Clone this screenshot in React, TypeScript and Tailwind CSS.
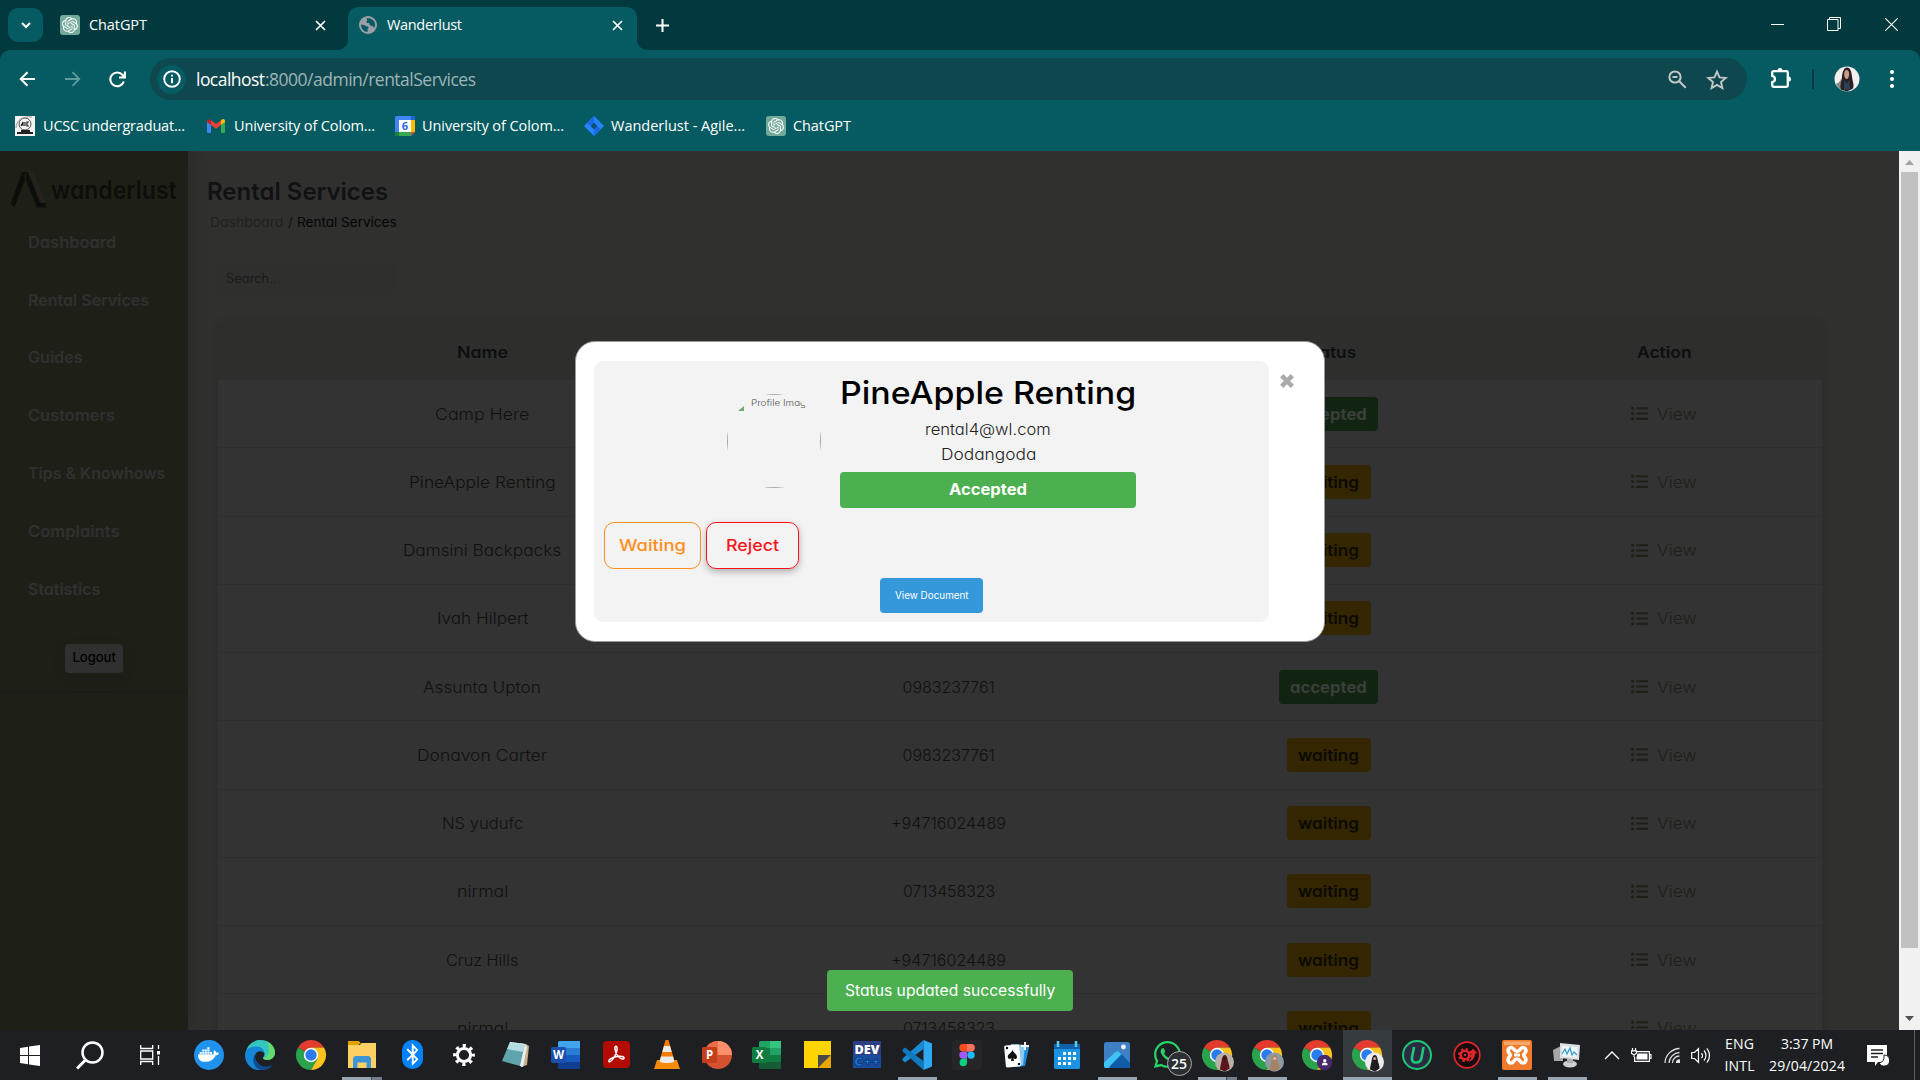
import { useLayoutEffect, useRef, useState } from "react";
import type { ReactNode } from "react";
import { FaDocker, FaBluetoothB, FaWhatsapp, FaListUl, FaUser } from "react-icons/fa";
import { SiOpenai } from "react-icons/si";

/* Single line of text whose tracking is adjusted so that it spans `w` pixels. */
function T({ w, children, className = "" }: { w: number; children: string; className?: string }) {
  const ref = useRef<HTMLSpanElement>(null);
  const [ls, setLs] = useState(0);
  useLayoutEffect(() => {
    const el = ref.current;
    if (!el) return;
    el.style.letterSpacing = "0px";
    const natural = el.getBoundingClientRect().width;
    const next = (w - natural) / Math.max(1, children.length - 1);
    el.style.letterSpacing = `${next}px`;
    setLs(next);
  }, [w, children]);
  return (
    <span
      ref={ref}
      className={`inline-block shrink-0 whitespace-pre ${className}`}
      style={{ letterSpacing: ls, marginRight: -ls }}
    >
      {children}
    </span>
  );
}

function P({ w, children, className = "" }: { w: number; children: string; className?: string }) {
  const ref = useRef<HTMLSpanElement>(null);
  const [k, setK] = useState(1);
  useLayoutEffect(() => {
    if (ref.current) setK(w / ref.current.offsetWidth);
  }, [w, children]);
  return (
    <span className={`block shrink-0 whitespace-pre ${className}`} style={{ width: w }}>
      <span ref={ref} className="inline-block origin-left align-top" style={{ transform: `scaleX(${k})` }}>
        {children}
      </span>
    </span>
  );
}

function GptIcon() {
  return (
    <span className="flex size-5 shrink-0 items-center justify-center rounded-[3px] bg-[#74aa9c]">
      <SiOpenai className="size-4 text-white" />
    </span>
  );
}

function Cross() {
  return (
    <svg width="11" height="11" viewBox="0 0 11 11" stroke="#fff" strokeWidth="1.7" className="shrink-0">
      <path d="M1 1l9 9M10 1l-9 9" />
    </svg>
  );
}

function TabStrip() {
  return (
    <div className="flex h-[50px] items-center bg-[#02393e] text-[14.5px] text-white">
      <div className="ml-2 flex h-[34px] w-[35px] items-center justify-center rounded-[10px] bg-[#055b61]">
        <svg width="10" height="7" viewBox="0 0 10 7" fill="none" stroke="#fff" strokeWidth="2">
          <path d="M1 1l4 4 4-4" />
        </svg>
      </div>
      <div className="flex w-[305px] items-center pl-[17px]">
        <GptIcon />
        <T w={58} className="ml-[9px]">ChatGPT</T>
        <span className="ml-auto mr-[22px]"><Cross /></span>
      </div>
      <div className="relative flex h-[43px] w-[289px] items-center self-end rounded-t-[10px] bg-[#055b61] pb-[7px] pl-[11px]">
        <svg className="absolute -left-[10px] bottom-0" width="10" height="10"><path d="M10 0v10H0A10 10 0 0 0 10 0z" fill="#055b61" /></svg>
        <svg className="absolute -right-[10px] bottom-0" width="10" height="10"><path d="M0 0v10h10A10 10 0 0 1 0 0z" fill="#055b61" /></svg>
        <svg width="18" height="18" viewBox="0 0 18 18" className="shrink-0">
          <circle cx="9" cy="9" r="9" fill="#9aa0a6" />
          <path d="M2 8.5c2 .2 3.300 .5 4.600 1.200s2.600.6 2.900 1.500-.6 1.500-1 2.300V16C4.800 15.800 2 13 2 8.500zM7.500 2.500C11 1.500 15 3.500 16 7.500c.3 2-.2 3.500-1 4.500-.5-1.400-1-2-2.200-2.100-1.500-.2-2.300-.8-2.300-1.800s-.8-1.200-2-1.100c-1-.2-1.300-1-.8-1.700.8-.8.3-1.600-.2-2.800z" fill="#055b61" />
        </svg>
        <T w={75} className="ml-[10px]">Wanderlust</T>
        <span className="ml-auto mr-[14px]"><Cross /></span>
      </div>
      <svg width="15" height="15" viewBox="0 0 15 15" stroke="#fff" strokeWidth="2" className="ml-[18px]">
        <path d="M7.500 1v13M1 7.500h13" />
      </svg>
      <div className="ml-auto mr-[22px] flex items-center gap-[43px]">
        <svg width="13" height="13" viewBox="0 0 13 13" stroke="#fff" className="-translate-x-px"><path d="M0 5.500h13" /></svg>
        <svg width="14" height="14" viewBox="0 0 14 14" fill="none" stroke="#fff" className="-translate-x-px -translate-y-px"><path d="M.5 2.500h10.500v11H.5zM2.500 2.500v-2h11v11h-2.500" /></svg>
        <svg width="13" height="13" viewBox="0 0 13 13" stroke="#fff" strokeWidth="1.100" className="-translate-y-px"><path d="M0 0l13 13M13 0L0 13" /></svg>
      </div>
    </div>
  );
}

function Toolbar() {
  return (
    <div className="bg-[#02393e]">
      <div className="flex h-[58px] items-center rounded-t-[10px] bg-[#055b61]">
        <svg width="16" height="16" viewBox="0 0 16 16" fill="none" stroke="#fff" strokeWidth="2" className="ml-[19px]"><path d="M16 8H2M8.500 1.200L1.700 8l6.800 6.800" /></svg>
        <svg width="16" height="16" viewBox="0 0 16 16" fill="none" stroke="#5f9a9e" strokeWidth="1.800" className="ml-[30px]"><path d="M0 8h14M7.500 1.200L14.300 8l-6.800 6.800" /></svg>
        <svg width="17" height="17" viewBox="0 0 17 17" fill="none" stroke="#fff" strokeWidth="2.100" className="ml-[28px]"><path d="M14.800 10.500A6.900 6.900 0 1 1 13.600 4L15.500 6M15.900.5v6H10" /></svg>
        <div className="ml-[24px] flex h-[42px] w-[1597px] items-center rounded-full bg-[#0f474e] pl-[7px]">
          <span className="flex size-[29px] items-center justify-center rounded-full bg-[#055b61]">
            <svg width="18" height="18" viewBox="0 0 18 18" fill="none" stroke="#fff" strokeWidth="1.900"><circle cx="9" cy="9" r="7.800" /><path d="M9 8v5.200M9 4.700v1.900" /></svg>
          </span>
          <span className="ml-[10px] text-[17.500px]">
            <T w={69} className="text-white">localhost</T>
            <T w={211} className="text-[#9db5b8]">:8000/admin/rentalServices</T>
          </span>
          <svg width="19" height="19" viewBox="0 0 19 19" fill="none" stroke="#c3c7c8" strokeWidth="2" className="ml-auto"><circle cx="7" cy="7" r="5.600" /><path d="M11.200 11.200l6.500 6.500M4.500 7h5" /></svg>
          <svg width="22" height="21" viewBox="0 0 22 21" fill="none" stroke="#c3c7c8" strokeWidth="1.900" className="ml-[19px] mr-[19px]"><path d="M11 2.600l2.500 5.800 6.200.5-4.700 4.100 1.400 6.100-5.400-3.200-5.400 3.200L7 13 2.300 8.900l6.200-.5z" /></svg>
        </div>
        <svg width="22" height="22" viewBox="0 0 22 22" fill="none" stroke="#fff" strokeWidth="2.300" className="ml-[23px]">
          <path d="M3.500 3.200h13a1.300 1.300 0 0 1 1.300 1.300v13a1.300 1.300 0 0 1-1.300 1.300h-13a1.300 1.300 0 0 1-1.300-1.300v-3.300c1.800-.3 2.700-1.600 2.700-3.200S4 8.200 2.200 7.800V4.500a1.300 1.300 0 0 1 1.300-1.300z" />
          <path d="M7.500 2.500a2.500 2.500 0 0 1 5 0zM18.500 8.500a2.500 2.500 0 0 1 0 5z" fill="#fff" stroke="none" />
        </svg>
        <span className="ml-[20px] h-5 w-[2px] bg-[#02393e]" />
        <svg width="26" height="26" viewBox="0 0 26 26" className="ml-[20px]">
          <circle cx="13" cy="13" r="12.500" fill="#f2f0ef" />
          <path d="M2 18c2-1 4-2 5-5l3 12C6 24 3 21 2 18z" fill="#8c8886" />
          <path d="M13 1.500c3.300 0 4.500 4 5 9s2.500 8 1 12l-6 3-6-2c-1.500-3 .5-8 1-13s2-9 5-9z" fill="#2a2022" />
          <path d="M12.500 4c2 0 3 2 2.500 5 0 2-1 4-2.300 4s-2.500-2-2.500-4.500.8-4.500 2.300-4.500z" fill="#c99c8c" />
          <path d="M10 14l3 4 2-4 1 9-6 1z" fill="#26445a" />
        </svg>
        <svg width="6" height="20" viewBox="0 0 6 20" fill="#fff" className="ml-[29px]"><circle cx="3" cy="3" r="2.100" /><circle cx="3" cy="10" r="2.100" /><circle cx="3" cy="17" r="2.100" /></svg>
      </div>
    </div>
  );
}

function Bookmarks() {
  return (
    <div className="flex h-[43px] items-start bg-[#055b61] pl-[15px] pt-[6px] text-[14.500px] text-white">
      <div className="flex h-6 items-center">
        <svg width="20" height="20" viewBox="0 0 20 20"><rect width="20" height="20" fill="#f3f3f3" /><circle cx="10" cy="8" r="6" fill="none" stroke="#555" /><path d="M1 12C1 4 8 0 17 1" stroke="#999" fill="none" /><path d="M6 10l2-4v4M10 6v4M14 6h-2v4h2" stroke="#222" strokeWidth="1.200" fill="none" /><path d="M2 17h16M6 15h9" stroke="#222" strokeWidth="2" /></svg>
        <T w={142} className="ml-2">UCSC undergraduat...</T>
        <svg width="18" height="14" viewBox="0 0 18 14" className="ml-[22px]"><path d="M0 2.500v10.300c0 .7.500 1.200 1.200 1.200H4V5z" fill="#4285f4" /><path d="M18 2.500v10.300c0 .7-.5 1.200-1.200 1.200H14V5z" fill="#34a853" /><path d="M14 1.500V6l4-3V2c0-1.800-2-2.600-3.300-1.500z" fill="#fbbc04" /><path d="M4 6V1.300l5 3.800 5-3.800V6L9 9.800z" fill="#ea4335" /><path d="M0 2v1l4 3V1.500L3.300.8C2-.4 0 .4 0 2z" fill="#c5221f" /></svg>
        <T w={141} className="ml-[9px]">University of Colom...</T>
        <svg width="20" height="20" viewBox="0 0 20 20" className="ml-[20px]"><rect width="20" height="20" rx="1.500" fill="#4285f4" /><path d="M16 4h4v12h-4z" fill="#fbbc04" /><path d="M0 16h16v4H1.500A1.500 1.500 0 0 1 0 18.500z" fill="#188038" /><path d="M4 16h12v4H4z" fill="#34a853" /><path d="M16 16h4l-4 4z" fill="#ea4335" /><path d="M20 16v4h-4z" fill="#055b61" /><path d="M16 0h2.500A1.500 1.500 0 0 1 20 1.500V4h-4z" fill="#1967d2" /><path d="M4 4h12v12H4z" fill="#fff" /><text x="10" y="14" textAnchor="middle" fontSize="11" fontWeight="700" fill="#2b6be0">6</text></svg>
        <T w={142} className="ml-[7px]">University of Colom...</T>
        <svg width="20" height="20" viewBox="0 0 20 20" className="ml-[20px]"><path d="M10 0l10 10-10 10L0 10z" fill="#2684ff" /><path d="M10 0v6.600L6.600 10 3 7z" fill="#1a6ae8" /><path d="M10 20v-6.600L13.400 10 17 13z" fill="#1a6ae8" /><path d="M10 6.600l3.400 3.400-3.400 3.400L6.600 10z" fill="#0a4f70" /></svg>
        <T w={134} className="ml-[7px]">Wanderlust - Agile...</T>
        <span className="ml-[21px] flex"><GptIcon /></span>
        <T w={58} className="ml-[7px]">ChatGPT</T>
      </div>
    </div>
  );
}

const nav: [string, number][] = [
  ["Dashboard", 88],
  ["Rental Services", 121],
  ["Guides", 55],
  ["Customers", 87],
  ["Tips & Knowhows", 137],
  ["Complaints", 92],
  ["Statistics", 72],
];

function Sidebar() {
  return (
    <aside className="z-10 w-[188px] shrink-0 bg-[#1e2018] shadow-[4px_0_14px_rgba(0,0,0,0.13)]">
      <div className="h-[541px] border-b border-[#191b14]">
        <div className="flex h-[62.500px] pl-[10px] pt-[21px]">
          <svg width="36" height="37" viewBox="0 0 36 37" className="shrink-0">
            <path d="M18.500 0h5l12 31h-4z" fill="#26211c" />
            <path d="M12 0h5.500l2 4L30 31h5.500v4.500h-8.500L15.500 7 4 36 1 31z" fill="#0d0e0b" />
            <path d="M15.500 1v7" stroke="#1e2018" />
          </svg>
          <P w={126} className="ml-[5px] text-[25px] font-semibold leading-9 text-[#0d0e0b]">wanderlust</P>
        </div>
        {nav.map(([label, w]) => (
          <div key={label} className="flex h-[57.800px] items-center pl-7 text-[15.500px] font-semibold text-[#303030]">
            <P w={w}>{label}</P>
          </div>
        ))}
        <div className="ml-[65px] mt-[25.500px] flex h-[29px] w-[58px] items-center justify-center rounded bg-[#303030] text-[13px] font-medium text-black shadow-[0_4px_14px_rgba(0,0,0,0.1)]">
          <P w={43}>Logout</P>
        </div>
      </div>
    </aside>
  );
}

type Row = { name: string; nw: number; phone: string; pw: number; ok?: boolean };
const rows: Row[] = [
  { name: "Camp Here", nw: 94, phone: "", pw: 92, ok: true },
  { name: "PineApple Renting", nw: 147, phone: "", pw: 92 },
  { name: "Damsini Backpacks", nw: 158, phone: "", pw: 92 },
  { name: "Ivah Hilpert", nw: 91, phone: "", pw: 92 },
  { name: "Assunta Upton", nw: 118, phone: "0983237761", pw: 92, ok: true },
  { name: "Donavon Carter", nw: 130, phone: "0983237761", pw: 92 },
  { name: "NS yudufc", nw: 81, phone: "+94716024489", pw: 115 },
  { name: "nirmal", nw: 51, phone: "0713458323", pw: 92 },
  { name: "Cruz Hills", nw: 72, phone: "+94716024489", pw: 115 },
  { name: "nirmal", nw: 51, phone: "0713458323", pw: 92 },
];

const grid = "grid grid-cols-[528px_405px_355px_316px] items-center justify-items-center";

function Main() {
  return (
    <main className="min-w-0 flex-1 bg-[#30302e]">
      <div className="pl-[19px] pt-[25px] text-[24px] font-semibold leading-8 text-[#101214]">
        <P w={181}>Rental Services</P>
      </div>
      <div className="mt-[2px] flex h-[26px] items-center gap-[5px] pl-[22px] text-[13px]">
        <P w={73} className="text-[#20221a]">Dashboard</P>
        <span className="w-1 text-[#111]">/</span>
        <P w={100} className="text-[#050505]">Rental Services</P>
      </div>
      <div className="ml-[29px] mt-[26px] flex h-[33px] w-[180px] items-center rounded-lg bg-[#2f2f2e] pl-[9px] text-[12.800px] font-light text-[#161616]">
        <P w={51}>Search..</P>
      </div>
      <div className="ml-[30px] mt-[28px] w-[1604px] rounded-t-lg bg-[#333333] text-[16px] shadow-[0_0_8px_rgba(0,0,0,0.12)]">
        <div className={`${grid} h-[57px] rounded-t-lg bg-[#2e2e2d] font-semibold text-[#0d0e0f]`}>
          <P w={51}>Name</P>
          <span />
          <P w={54}>Status</P>
          <P w={54.5}>Action</P>
        </div>
        {rows.map((r, i) => (
          <div key={i} className={`${grid} h-[68.250px] border-b border-[#2e2e2e] font-light text-[#101010]`}>
            <P w={r.nw}>{r.name}</P>
            {r.phone ? <P w={r.pw}>{r.phone}</P> : <span />}
            {r.ok ? (
              <span className="flex h-[34px] w-[99px] items-center justify-center rounded bg-[#112411] font-bold text-[#3a3f3a]"><P w={77}>accepted</P></span>
            ) : (
              <span className="flex h-[34px] w-[84px] items-center justify-center rounded bg-[#332600] font-semibold text-[#0c0a03]"><P w={61}>waiting</P></span>
            )}
            <span className="flex items-center text-[#1e2018]">
              <FaListUl className="size-[17px]" />
              <P w={40} className="ml-[9px]">View</P>
            </span>
          </div>
        ))}
      </div>
    </main>
  );
}

function Modal() {
  return (
    <div className="absolute left-[575px] top-[190px] flex h-[301px] w-[750px] rounded-[20px] border border-[#999] bg-white pl-[18px] pt-[19px]">
      <div className="flex h-[261px] w-[675px] flex-col rounded-[9px] bg-[#f3f3f3] px-[10px]">
        <div className="flex gap-[19px] pl-[123px]">
          <div className="relative mt-[33px] size-[94px] overflow-hidden rounded-full">
            <div className="flex size-full border border-[#aaa]">
              <svg width="6" height="5" viewBox="0 0 6 5" className="ml-[10px] mt-[11px]"><path d="M6 0v5H0z" fill="#76a779" /></svg>
              <P w={55} className="ml-[7px] mt-px text-[8.800px] font-light leading-[14px] text-[#555]">Profile Imag</P>
            </div>
          </div>
          <div className="flex w-[296px] flex-col items-center pt-[11px] text-[#222]">
            <span className="text-[31.500px] font-medium leading-[42px] text-black"><P w={296}>PineApple Renting</P></span>
            <span className="mt-[3px] text-[15.500px] font-light leading-[25px]"><P w={126}>rental4@wl.com</P></span>
            <span className="text-[15.500px] font-light leading-[25px]"><P w={95}>Dodangoda</P></span>
            <span className="mt-[5px] flex h-9 w-full items-center justify-center rounded bg-[#4caf50] text-[15.500px] font-bold text-white"><P w={78}>Accepted</P></span>
          </div>
        </div>
        <div className="mt-[14px] flex gap-[5px] text-[16.500px] font-medium">
          <span className="flex h-[47px] w-[97px] items-center justify-center rounded-[10px] border border-[#ff8e1c] text-[#ff8e1c]"><P w={67}>Waiting</P></span>
          <span className="flex h-[47px] w-[93px] items-center justify-center rounded-[10px] border border-[#f7131b] text-[#f7131b] shadow-[0_3px_7px_rgba(0,0,0,0.28)]"><P w={53}>Reject</P></span>
        </div>
        <span className="ml-[276px] mt-[9px] flex h-[35px] w-[103px] items-center justify-center rounded bg-[#3498db] text-[10px] text-white"><P w={74}>View Document</P></span>
      </div>
      <svg width="14" height="14" viewBox="0 0 14 14" stroke="#aaa" strokeWidth="4.600" className="ml-[11px] mt-[13px]"><path d="M1.700 1.700l10.600 10.600M12.300 1.700L1.700 12.300" /></svg>
    </div>
  );
}

function Scrollbar() {
  return (
    <div className="flex w-[21px] shrink-0 flex-col items-center bg-[#f1f1f1]">
      <svg width="9" height="5" viewBox="0 0 9 5" className="mt-[9px]"><path d="M4.500 0L9 5H0z" fill="#a3a3a3" /></svg>
      <div className="mt-[7px] h-[776px] w-[17px] shrink-0 bg-[#c1c1c1]" />
      <svg width="9" height="5" viewBox="0 0 9 5" className="mb-[9px] mt-auto"><path d="M4.500 5L0 0h9z" fill="#505050" /></svg>
    </div>
  );
}

function Chrome({ badge }: { badge?: ReactNode }) {
  return (
    <svg width="30" height="30" viewBox="0 0 30 30" className="overflow-visible">
      <path d="M15 15L2 7.500A15 15 0 0 1 28 7.500H15z" fill="#e33b2e" />
      <path d="M15 15L2 7.500A15 15 0 0 0 15 30l6.500-11.200z" fill="#2ba24c" />
      <path d="M15 7.500h13A15 15 0 0 1 15 30l6.500-11.200z" fill="#fcc31e" />
      <circle cx="15" cy="15" r="7.200" fill="#fff" />
      <circle cx="15" cy="15" r="5.700" fill="#2a7bee" />
      {badge}
    </svg>
  );
}

function Photo({ bg, a, b }: { bg: string; a: string; b: string }) {
  return (
    <g>
      <circle cx="22.500" cy="22" r="9.500" fill={bg} />
      <path d="M18 29.500c0-2 .8-5 1.500-8 .5-3.500 1.200-6.500 3.300-6.500 2.500 0 2.700 4 3.400 7 .6 2.500 1.600 4 1.300 6.500l-4.500 3z" fill={a} />
      <circle cx="22.700" cy="18.500" r="1.600" fill={b} />
    </g>
  );
}

function OfficeIcon({ letter, dark, shape }: { letter: string; dark: string; shape: ReactNode }) {
  return (
    <svg width="30" height="28" viewBox="0 0 30 28">
      {shape}
      <rect x="0" y="6" width="15" height="16" rx="1.500" fill={dark} />
      <text x="7.500" y="18.200" textAnchor="middle" fontSize="11.500" fontWeight="700" fill="#fff">{letter}</text>
    </svg>
  );
}

const taskIcons: { icon: ReactNode; line?: string; split?: boolean; active?: boolean }[] = [
  { icon: <span className="flex size-[30px] items-center justify-center rounded-full bg-[#1f92ec]"><FaDocker className="size-[21px] text-white" /></span> },
  {
    icon: (
      <svg width="30" height="30" viewBox="0 0 30 30">
        <path d="M1 11C3 4 9 0 15.500 0 24 0 30 6 30 12.500c0 4.500-3.500 7.500-7.500 7.500-3 0-4.500-1.200-4.500-2s1.500-1.600 1.500-4c0-3-3-5.500-7-5.500C7 8.500 3 9.500 1 11z" fill="#35c5c0" />
        <path d="M22 1.500C27 4 30 8 30 12.500c0 4.500-3.500 7.500-7.500 7.500-3 0-4.500-1.200-4.500-2 6 0 8-8 4-16.500z" fill="#62db6a" />
        <path d="M0 15C0 9 5 6.500 11.500 6.500c5 0 8 3.500 8 7-2-3-7-3-9 .5-2 4 0 9 4 12l3 3.800C8 31.500 0 25 0 15z" fill="#1687d8" />
        <path d="M10.500 14c-1.500 7 4 12.500 11 12.500 3 0 5-1 6.500-2-3 4.500-8 6-12 5.500C9 29 6 19 10.500 14z" fill="#114a8b" />
      </svg>
    ),
  },
  { icon: <Chrome /> },
  {
    icon: (
      <svg width="28" height="28" viewBox="0 0 28 28"><path d="M0 0h11l2 3h-2v4H0z" fill="#e0a000" /><path d="M0 4h12l1.500-2H28v25H0z" fill="#fcd062" /><path d="M5 27V17l2-2h14l2 2v10h-4.500v-5.500h-9V27z" fill="#3d95d6" /></svg>
    ),
    line: "w-[40px]",
    split: true,
  },
  { icon: <span className="flex h-[29px] w-[21px] items-center justify-center rounded-[10px] bg-[#0082fc]"><FaBluetoothB className="size-[23px] text-white" /></span> },
  {
    icon: (
      <svg width="22" height="22" viewBox="0 0 22 22" fill="none" stroke="#fff"><circle cx="11" cy="11" r="6.600" strokeWidth="3" /><circle cx="11" cy="11" r="9.200" strokeWidth="3.400" strokeDasharray="3.200 4.026" strokeDashoffset="1.600" /></svg>
    ),
  },
  {
    icon: (
      <svg width="28" height="27" viewBox="0 0 28 27"><path d="M10 2l15 1 3 2-2 19-6 2z" fill="#c5b18a" /><path d="M9 1l15 2-5 22L1 20z" fill="#5fa3ad" /><path d="M9 1l15 2-2 8L6 8z" fill="#b3dce0" /><path d="M24 3l2 3-4 20-3-1z" fill="#e9eef0" /><path d="M9 1.500l15 2" stroke="#e8f0f0" strokeDasharray="1.500 1" /></svg>
    ),
  },
  {
    icon: <OfficeIcon letter="W" dark="#1a4fae" shape={<g><path d="M7 1.500A1.500 1.500 0 0 1 8.500 0H29v7H7z" fill="#41a5ee" /><path d="M7 7h22v7H7z" fill="#2b7cd3" /><path d="M7 14h22v7H7z" fill="#185abd" /><path d="M7 21h22v7H8.500A1.500 1.500 0 0 1 7 26.500z" fill="#103f91" /></g>} />,
  },
  {
    icon: (
      <svg width="27" height="27" viewBox="0 0 27 27"><rect width="27" height="27" rx="4" fill="#b30b00" /><path d="M12.800 5.300c2.200 0 1.600 5.300-1.300 10.300-2 3.500-4.600 6-5.500 4.900-1.200-1.500 3.500-4.300 8-5 4-.7 7.400.1 7 1.800-.5 1.900-4.600.2-7-3.500-1.900-3-2.900-8.500-1.200-8.500z" fill="none" stroke="#fff" strokeWidth="1.500" /></svg>
    ),
  },
  {
    icon: (
      <svg width="26" height="29" viewBox="0 0 26 29"><path d="M3 20h20l3 9H0z" fill="#f58a0b" /><path d="M11.500 0h3l6 21c-2 3-13 3-15 0z" fill="#f57c05" /><path d="M10 6h6l1.700 6H8.300zM7 16.500h12l1.300 5c-3 2-11.600 2-14.600 0z" fill="#ececec" /></svg>
    ),
  },
  {
    icon: <OfficeIcon letter="P" dark="#c43e1c" shape={<g><circle cx="16" cy="14" r="14" fill="#d35230" /><path d="M16 0a14 14 0 0 1 14 14H16z" fill="#ff8f6b" /><path d="M16 0v14H2A14 14 0 0 1 16 0z" fill="#ed6c47" /></g>} />,
  },
  {
    icon: <OfficeIcon letter="X" dark="#107c41" shape={<g><path d="M7 1.500A1.500 1.500 0 0 1 8.500 0H18v7H7z" fill="#21a366" /><path d="M18 0h11v7H18z" fill="#33c481" /><path d="M7 7h11v14H7z" fill="#107c41" /><path d="M18 7h11v7H18z" fill="#21a366" /><path d="M18 14h11v7H18z" fill="#107c41" /><path d="M7 21h22v7H8.500A1.500 1.500 0 0 1 7 26.500z" fill="#185c37" /></g>} />,
  },
  { icon: <svg width="27" height="27" viewBox="0 0 27 27"><path d="M0 0h27v14L14 27H0z" fill="#ffd400" /><path d="M14 14h13L14 27z" fill="#4a4a48" /><path d="M27 14v13H14z" fill="#e8a703" /></svg> },
  {
    icon: (
      <svg width="28" height="27" viewBox="0 0 28 27"><rect width="28" height="27" fill="#1b4b9c" /><rect width="28" height="14" fill="#2b3f85" /><text x="14" y="12.500" textAnchor="middle" fontSize="12" fontWeight="800" textLength="25" lengthAdjust="spacingAndGlyphs" fill="#fff">DEV</text><text x="14" y="25" textAnchor="middle" fontSize="12" fontWeight="800" textLength="26" lengthAdjust="spacingAndGlyphs" fill="#1577e0" stroke="#0a2350" strokeWidth=".5">C++</text></svg>
    ),
  },
  {
    icon: (
      <svg width="30" height="30" viewBox="0 0 30 30"><path d="M21.500 0v9L3 22.500.5 20.300v-1.500z" fill="#1a8ad4" /><path d="M.5 9.700L3 7.500 21.500 21v9L.5 11.200z" fill="#0f78bf" /><path d="M21.500 0L30 3.500v23L21.500 30z" fill="#2fa9f2" /></svg>
    ),
    line: "w-[39px]",
  },
  {
    icon: (
      <svg width="30" height="30" viewBox="0 0 30 30"><rect width="30" height="30" rx="3" fill="#262628" /><path d="M15 4h-4a3.700 3.700 0 0 0 0 7.400h4zM15 4h4a3.700 3.700 0 0 1 0 7.400h-4z" fill="#f24e1e" /><path d="M15 4h4a3.700 3.700 0 0 1 0 7.400h-4z" fill="#ff7262" /><path d="M15 11.400h-4a3.700 3.700 0 0 0 0 7.400h4z" fill="#a259ff" /><circle cx="19" cy="15.100" r="3.700" fill="#1abcfe" /><path d="M15 18.800h-4a3.700 3.700 0 1 0 4 3.700z" fill="#0acf83" /></svg>
    ),
  },
  {
    icon: (
      <svg width="28" height="28" viewBox="0 0 28 28"><path d="M10 4l16 2-4 19-10 1z" fill="#1d8edb" /><path d="M8 3l14 1-2 20-9 1z" fill="#8ccaf2" /><rect x="2" y="4" width="15" height="22" rx="1.500" fill="#fff" transform="rotate(-5 9 15)" /><path d="M9.500 9c1 3 5 4.500 4.500 7.500-.3 1.800-2.700 2-3.700.5l.7 3h-3l.5-3c-1.200 1.500-3.800 1-3.800-1C4.700 13 8.700 12 9.500 9z" fill="#111" /><path d="M22 1v8M18 5h8" stroke="#fff" strokeWidth="1.800" /><circle cx="4" cy="7" r="1.200" /><circle cx="16" cy="23" r="1.200" /></svg>
    ),
  },
  {
    icon: (
      <svg width="26" height="28" viewBox="0 0 26 28"><rect y="3" width="26" height="25" rx="1.500" fill="#1b93e3" /><path d="M0 3h26v5H0z" fill="#0f62a8" /><path d="M4 0v6M22 0v6" stroke="#5cc8f7" strokeWidth="2.600" /><g fill="#fff"><path d="M9 11h3v3H9zM14 11h3v3h-3zM19 11h3v3h-3zM4 16h3v3H4zM9 16h3v3H9zM14 16h3v3h-3zM19 16h3v3h-3zM4 21h3v3H4zM9 21h3v3H9zM14 21h3v3h-3z" /></g></svg>
    ),
  },
  {
    icon: (
      <svg width="26" height="26" viewBox="0 0 26 26"><rect width="26" height="26" rx="2.500" fill="#3f7fc4" /><path d="M5 19l8-8.500c1-1 2-1 3 0L26 21v3a2 2 0 0 1-2 2H6z" fill="#0f5da8" /><path d="M0 20.500L11.500 10c1.200-1.100 2.500-1.200 3.700 0l2.300 2.300L4 26H2a2 2 0 0 1-2-2z" fill="#3fc3f5" /><circle cx="19.500" cy="5" r="2.400" fill="#f2f6fb" /></svg>
    ),
    line: "w-[39px]",
  },
  {
    icon: (
      <span className="relative flex">
        <FaWhatsapp className="size-[31px] text-[#25d366]" />
        <span className="absolute -bottom-[6px] -right-[9px] flex size-[25px] items-center justify-center rounded-full border border-[#aaa] bg-[#2c3033] text-[14px] font-semibold text-white">25</span>
      </span>
    ),
  },
  { icon: <Chrome badge={<Photo bg="#b9b0a8" a="#5d1620" b="#2a1a1a" />} />, line: "w-[39px]", split: true },
  { icon: <Chrome badge={<Photo bg="#8f99a1" a="#a38363" b="#e0bf9c" />} />, line: "w-[39px]" },
  { icon: <Chrome badge={<g><circle cx="22.500" cy="22.500" r="7.700" fill="#472a6b" /><FaUser x="19.500" y="19" size={6.500} color="#fff" /></g>} /> },
  { icon: <Chrome badge={<Photo bg="#ececec" a="#211c20" b="#c99c8c" />} />, line: "w-[49px]", active: true },
  {
    icon: (
      <svg width="30" height="30" viewBox="0 0 30 30"><circle cx="15" cy="15" r="14" fill="#2b2c42" stroke="#1fc878" strokeWidth="2" /><path d="M12 7L10 17.500c-.5 3 .8 5 4 5s5-2 5.500-4.500L21.500 7" fill="none" stroke="#1fc878" strokeWidth="2.600" /></svg>
    ),
  },
  {
    icon: (
      <svg width="28" height="28" viewBox="0 0 28 28"><circle cx="14" cy="14" r="12.800" fill="#150c0d" stroke="#e0262c" strokeWidth="1.700" /><circle cx="12" cy="14" r="4.300" fill="none" stroke="#e0262c" strokeWidth="2.600" /><circle cx="12" cy="14" r="6" fill="none" stroke="#e0262c" strokeWidth="2" strokeDasharray="2.300 2.410" /><circle cx="12" cy="14" r="1.200" fill="#e0262c" /><path d="M20 7.500l4.500 5h-2.500c0 4-2 7-6 8.500 2-2.500 2.500-5 2.300-8.500H16z" fill="#e0262c" /></svg>
    ),
  },
  {
    icon: (
      <svg width="30" height="30" viewBox="0 0 30 30"><rect width="30" height="30" rx="2" fill="#f07a2c" /><path d="M2 1.500h26V5H2z" fill="#f8a66c" /><g fill="none" stroke="#fff" strokeWidth="3.600" strokeLinejoin="round"><path d="M9 7.500c-3 .5-4 3.500-1.500 6 1 1 1 2 0 3-2.500 2.500-1.500 6.500 2 6.500 2.800 0 2-4 5.500-4s2.700 4 5.500 4c3.500 0 4.500-4 2-6.500-1-1-1-2 0-3 2.500-2.500 1.500-5.500-1.500-6-3-.3-2.500 4-6 4s-3-4.300-6-4z" /></g><path d="M12 15h6" stroke="#fff" strokeWidth="3" /></svg>
    ),
    line: "w-[39px]",
  },
  {
    icon: (
      <svg width="28" height="28" viewBox="0 0 28 28"><path d="M0 9l10-5v16L1 20z" fill="#a5a8a7" /><path d="M7 2l20 2-1 15-19-2z" fill="#dcdedd" /><path d="M9 4.500l16 1.700-.8 10.800L9 15.300z" fill="#eaf5fb" /><path d="M9 13l3-5 2 5 3-6 2 7 2-3 3 3" fill="none" stroke="#3d9ac9" strokeWidth="1.200" /><ellipse cx="17" cy="23" rx="7" ry="3.500" fill="#cfd1d0" /><path d="M14 18h6v4h-6z" fill="#aeb1b0" /></svg>
    ),
    line: "w-[39px]",
  },
];

function Taskbar() {
  return (
    <div className="flex h-[50px] items-stretch bg-[#1d1f22] text-white">
      <div className="flex w-[183px] shrink-0 items-center">
        <svg width="20" height="21" viewBox="0 0 20 21" fill="#fff" className="ml-5"><path d="M0 3l8-1.200V10H0zM9 1.600L20 0v10H9zM0 11h8v8.200L0 18zM9 11h11v10L9 19.400z" /></svg>
        <svg width="28" height="29" viewBox="0 0 28 29" fill="none" stroke="#fff" strokeWidth="2.500" className="ml-9"><circle cx="16.500" cy="11.500" r="10" /><path d="M9.500 19L1 27.500" strokeWidth="3" /></svg>
        <svg width="20" height="20" viewBox="0 0 20 20" fill="none" stroke="#fff" strokeWidth="1.300" className="ml-9"><path d="M.7 0v3.500h12V0M.7 20v-3.500h12V20M.7 6h12v8H.7zM18.500 0v4M18.500 11v9" /><path d="M17 6h3v3.500h-3z" fill="#fff" stroke="none" /></svg>
      </div>
      {taskIcons.map((t, i) => (
        <div key={i} className={`flex shrink-0 flex-col items-center ${i < 9 ? "w-[51px]" : "w-[50px]"}`}>
          <div className={`flex h-[47px] items-center justify-center pt-[2px] ${t.active ? "w-[49px] bg-[#363b40]" : ""}`}>{t.icon}</div>
          {t.line && (
            <div className={`flex h-[3px] justify-end bg-[#98a5b5] ${t.line}`}>
              {t.split && <span className="w-[11px] border-l border-[#40464d] bg-[#727d8a]" />}
            </div>
          )}
        </div>
      ))}
      <div className="flex min-w-0 flex-1 items-center text-[14px]">
        <svg width="16" height="9" viewBox="0 0 16 9" fill="none" stroke="#fff" strokeWidth="1.400" className="ml-[12px] shrink-0"><path d="M1 8l7-7 7 7" /></svg>
        <svg width="21" height="15" viewBox="0 0 21 15" fill="none" stroke="#fff" strokeWidth="1.200" className="ml-[11px] shrink-0"><path d="M5 3.600h13.400v9.800H3.600V9M18.400 6.500h1.600v4h-1.600M1.500 0v2.500M4.500 0v2.500M.5 2.800h5v2.500L3 7 .5 5.300zM3 7v2" /><path d="M6.500 5.500h10v6H5.500V9z" fill="#fff" stroke="none" /></svg>
        <svg width="16" height="16" viewBox="0 0 16 16" fill="none" stroke="#ddd" strokeWidth="1.300" className="ml-[12px] shrink-0"><path d="M1 16A15 15 0 0 1 15.500 1.500M5 16A11 11 0 0 1 15.500 5.500M8.500 16a7 7 0 0 1 7-7" /><path d="M12.500 16a3 3 0 0 1 3-3v3z" fill="#fff" /></svg>
        <svg width="20" height="17" viewBox="0 0 20 17" fill="none" stroke="#fff" strokeWidth="1.200" className="ml-[11px] shrink-0"><path d="M.7 5.500h2.800L7.500 1.700v13.600L3.500 11.500H.7zM10.500 6a4 4 0 0 1 0 5M13 3.500a7.500 7.500 0 0 1 0 10M15.800 1.300a11 11 0 0 1 0 14.400" /></svg>
        <div className="ml-[13px] flex w-[31px] flex-col items-center leading-[22px]"><T w={29}>ENG</T><T w={30}>INTL</T></div>
        <div className="ml-[14px] flex w-[76px] flex-col items-center leading-[22px]"><T w={52}>3:37 PM</T><T w={76}>29/04/2024</T></div>
        <svg width="22" height="22" viewBox="0 0 22 22" className="ml-[22px] shrink-0"><path d="M0 1h20v17h-9l-3 4v-4H0z" fill="#fff" /><path d="M4 6h12M4 9.500h12M4 13h7" stroke="#1d1f22" strokeWidth="1.400" /><path d="M17 11a5.500 5.500 0 1 1-5 7.500c3 .5 5.500-2 5-7.500z" fill="#fff" stroke="#1d1f22" /></svg>
        <span className="ml-auto mr-[5px] h-full w-px bg-[#5c5e60]" />
      </div>
    </div>
  );
}

export default function App() {
  return (
    <div className="flex h-[1080px] w-[1920px] flex-col overflow-hidden font-['Open_Sans','Noto_Sans',sans-serif]">
      <TabStrip />
      <Toolbar />
      <Bookmarks />
      <div className="relative flex h-[879px] overflow-hidden font-['Inter',sans-serif] [font-feature-settings:'cv11']">
        <Sidebar />
        <Main />
        <Scrollbar />
        <Modal />
        <div className="absolute left-[827px] top-[819px] flex h-[41px] w-[246px] items-center justify-center rounded bg-[#4caf50] text-[15.500px] text-white">
          <P w={210}>Status updated successfully</P>
        </div>
      </div>
      <Taskbar />
    </div>
  );
}
